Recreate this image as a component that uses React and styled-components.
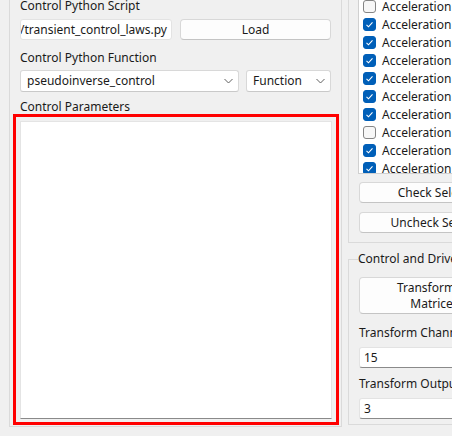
import React from 'react';
import styled, { createGlobalStyle } from 'styled-components';

const GlobalStyle = createGlobalStyle`
  html, body {
    margin: 0;
    padding: 0;
    background: #f0f0f0;
  }
  body {
    font-family: 'Segoe UI', 'Noto Sans', 'Liberation Sans', sans-serif;
    font-size: 12px;
    color: #1a1a1a;
  }
`;

const Stage = styled.div`
  width: 452px;
  height: 436px;
  overflow: hidden;
  display: flex;
  align-items: flex-start;
  padding-left: 9px;
  box-sizing: border-box;
`;

const LeftFrame = styled.div`
  flex: none;
  width: 333px;
  margin-top: -10px;
  padding: 6px 9px 1px 10px;
  box-sizing: border-box;
  border: 1px solid #dadada;
  display: flex;
  flex-direction: column;
`;

const Label = styled.div`
  height: 16px;
  box-sizing: border-box;
  padding-top: 1px;
  line-height: 16px;
  white-space: nowrap;
  margin-top: ${p => p.$top || 0}px;
`;

const Row = styled.div`
  display: flex;
  gap: ${p => p.$gap || 8}px;
  margin-top: ${p => p.$top || 0}px;
`;

const LineEdit = styled.div`
  width: ${p => p.$w || 152}px;
  height: 21px;
  box-sizing: border-box;
  background: #fff;
  border: 1px solid #e3e3e3;
  border-bottom-color: ${p => (p.$under ? '#8a8a8a' : '#e3e3e3')};
  border-radius: 3px;
  display: flex;
  align-items: center;
  justify-content: ${p => (p.$scrolled ? 'flex-end' : 'flex-start')};
  padding: 0 4px;
  overflow: hidden;
  white-space: nowrap;
  line-height: 16px;
`;

const Button = styled.div`
  width: ${p => p.$w || 151}px;
  height: ${p => p.$h || 21}px;
  flex: none;
  box-sizing: border-box;
  background: #fdfdfd;
  border: 1px solid #d8d8d8;
  border-bottom-color: #c4c4c4;
  border-radius: 4px;
  display: flex;
  flex-direction: column;
  align-items: center;
  justify-content: center;
  text-align: center;
  line-height: 16px;
  white-space: nowrap;
  margin-top: ${p => p.$top || 0}px;
`;

const Combo = styled.div`
  width: ${p => p.$w}px;
  height: 22px;
  flex: none;
  box-sizing: border-box;
  background: #fff;
  border: 1px solid #d8d8d8;
  border-bottom-color: #c9c9c9;
  border-radius: 3px;
  display: flex;
  align-items: center;
  justify-content: space-between;
  padding: 0 5px 0 6px;
  line-height: 16px;
  white-space: nowrap;
`;

const Highlight = styled.div`
  margin: 0 -7px;
  border: 3px solid #ff0000;
  padding: 4px 4px 3px 4px;
`;

const TextArea = styled.div`
  height: 296px;
  background: #fff;
  border: 1px solid #e4e4e4;
  border-bottom-color: #8a8a8a;
`;

const RightColumn = styled.div`
  flex: none;
  width: 200px;
  margin-left: 6px;
  margin-top: -16px;
  display: flex;
  flex-direction: column;
`;

const Group = styled.div`
  border: 1px solid #dadada;
  padding: 10px 0 9px 10px;
  display: flex;
  flex-direction: column;
  gap: 9px;
`;

const CheckList = styled.div`
  height: 179px;
  box-sizing: border-box;
  background: #fff;
  border: 1px solid #d0d0d0;
  border-right: none;
  padding-top: 1px;
  overflow: hidden;
  margin-left: -1px;
  margin-bottom: -1px;
`;

const CheckRow = styled.div`
  height: 18px;
  display: flex;
  align-items: center;
  gap: 6px;
  padding-left: 4px;
  white-space: nowrap;
`;

const Box = styled.span`
  width: 13px;
  height: 13px;
  box-sizing: border-box;
  border-radius: 3px;
  flex: none;
  display: flex;
  align-items: center;
  justify-content: center;
  background: ${p => (p.$on ? '#005fb8' : '#f7f7f7')};
  border: 1px solid ${p => (p.$on ? '#005fb8' : '#858585')};
`;

const FieldSet = styled.fieldset`
  margin: 8px 0 0 0;
  padding: 0 0 5px 10px;
  border: 1px solid #dadada;
  min-width: 0;
  display: flex;
  flex-direction: column;
`;

const Legend = styled.legend`
  padding: 0;
  margin-left: -1px;
  line-height: 16px;
  white-space: nowrap;
`;

const Chevron = () => (
  <svg width="9" height="6" viewBox="0 0 9 6">
    <polyline points="0.5,1 4.5,5 8.5,1" fill="none" stroke="#606060" strokeWidth="1" />
  </svg>
);

const Tick = () => (
  <svg width="11" height="11" viewBox="0 0 11 11">
    <polyline points="2.5,5.8 4.5,7.8 8.5,3.4" fill="none" stroke="#fff" strokeWidth="1.1" />
  </svg>
);

const signals = [
  ['Acceleration X 1', false],
  ['Acceleration Y 1', true],
  ['Acceleration Z 1', true],
  ['Acceleration X 2', true],
  ['Acceleration Y 2', true],
  ['Acceleration Z 2', true],
  ['Acceleration X 3', true],
  ['Acceleration Y 3', false],
  ['Acceleration Z 3', true],
  ['Acceleration X 4', true],
];

export default function App() {
  return (
    <>
      <GlobalStyle />
      <Stage>
        <LeftFrame>
          <Label>Control Python Script</Label>
          <Row $top={6}>
            <LineEdit $scrolled>C:/controls/transient_control_laws.py</LineEdit>
            <Button>Load</Button>
          </Row>
          <Label $top={9}>Control Python Function</Label>
          <Row $top={5} $gap={7}>
            <Combo $w={219}>
              <span>pseudoinverse_control</span>
              <Chevron />
            </Combo>
            <Combo $w={85}>
              <span>Function</span>
              <Chevron />
            </Combo>
          </Row>
          <Label $top={6}>Control Parameters</Label>
          <Highlight>
            <TextArea />
          </Highlight>
        </LeftFrame>

        <RightColumn>
          <Group>
            <CheckList>
              {signals.map(([name, on]) => (
                <CheckRow key={name}>
                  <Box $on={on}>{on && <Tick />}</Box>
                  <span>{name}</span>
                </CheckRow>
              ))}
            </CheckList>
            <Button $w={162}>Check Selected</Button>
            <Button $w={162}>Uncheck Selected</Button>
          </Group>

          <FieldSet>
            <Legend>Control and Drive Settings</Legend>
            <Button $w={151} $h={37} $top={10}>
              <span>Transform All</span>
              <span>Matrices</span>
            </Button>
            <Label $top={10}>Transform Channels</Label>
            <Row $top={7}>
              <LineEdit $w={190} $under>15</LineEdit>
            </Row>
            <Label $top={7}>Transform Outputs</Label>
            <Row $top={7}>
              <LineEdit $w={190} $under>3</LineEdit>
            </Row>
          </FieldSet>
        </RightColumn>
      </Stage>
    </>
  );
}
